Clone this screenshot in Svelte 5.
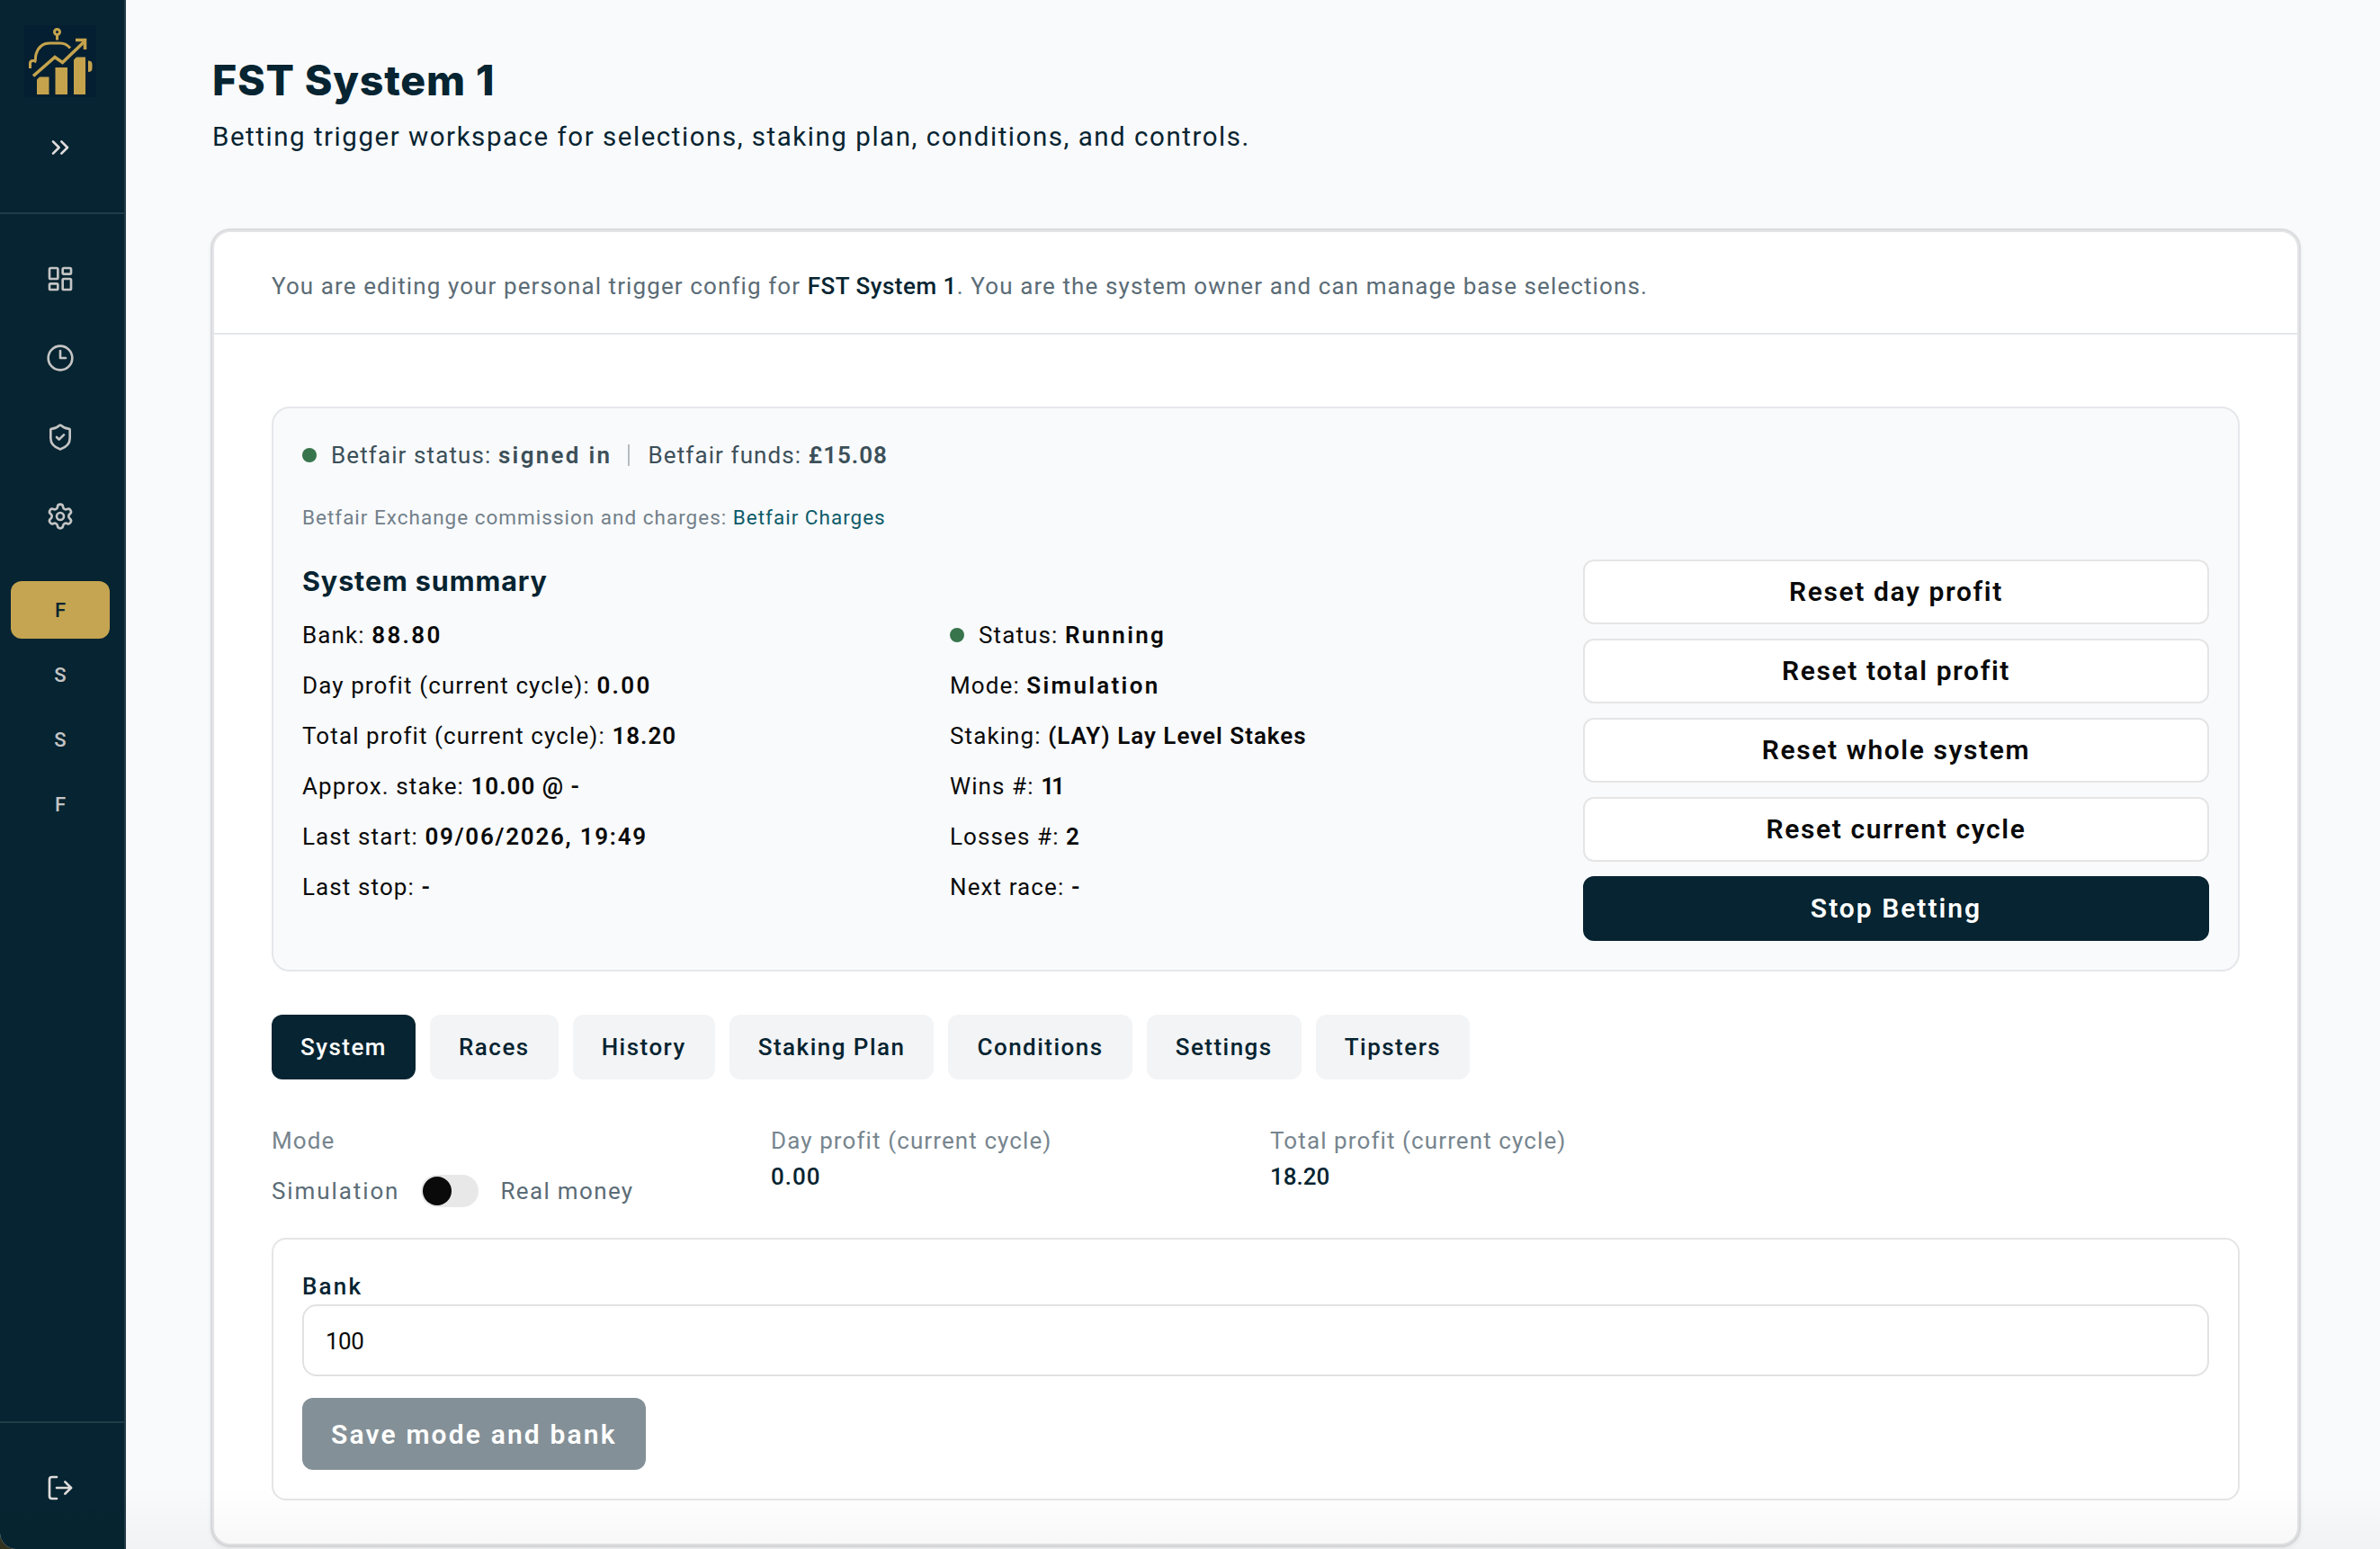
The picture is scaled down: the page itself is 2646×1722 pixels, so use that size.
<script lang="ts">
  const navItems = [
    {
      label: 'Dashboard',
      paths: ['M4 3h5a1 1 0 0 1 1 1v7a1 1 0 0 1-1 1H4a1 1 0 0 1-1-1V4a1 1 0 0 1 1-1z', 'M15 3h5a1 1 0 0 1 1 1v3a1 1 0 0 1-1 1h-5a1 1 0 0 1-1-1V4a1 1 0 0 1 1-1z', 'M15 12h5a1 1 0 0 1 1 1v7a1 1 0 0 1-1 1h-5a1 1 0 0 1-1-1v-7a1 1 0 0 1 1-1z', 'M4 16h5a1 1 0 0 1 1 1v3a1 1 0 0 1-1 1H4a1 1 0 0 1-1-1v-3a1 1 0 0 1 1-1z']
    },
    {
      label: 'History',
      paths: ['M22 12a10 10 0 1 1-20 0 10 10 0 0 1 20 0z', 'M12 6v6h4.5']
    },
    {
      label: 'Security',
      paths: ['M20 13c0 5-3.5 7.5-7.66 8.95a1 1 0 0 1-.67-.01C7.5 20.5 4 18 4 13V6a1 1 0 0 1 1-1c2 0 4.5-1.2 6.24-2.72a1.17 1.17 0 0 1 1.52 0C14.51 3.81 17 5 19 5a1 1 0 0 1 1 1z', 'm9 12 2 2 4-4']
    },
    {
      label: 'Settings',
      paths: ['M9.671 4.136a2.34 2.34 0 0 1 4.659 0 2.34 2.34 0 0 0 3.319 1.915 2.34 2.34 0 0 1 2.33 4.033 2.34 2.34 0 0 0 0 3.831 2.34 2.34 0 0 1-2.33 4.033 2.34 2.34 0 0 0-3.319 1.915 2.34 2.34 0 0 1-4.659 0 2.34 2.34 0 0 0-3.32-1.915 2.34 2.34 0 0 1-2.33-4.033 2.34 2.34 0 0 0 0-3.831A2.34 2.34 0 0 1 6.35 6.051a2.34 2.34 0 0 0 3.319-1.915', 'M15 12a3 3 0 1 1-6 0 3 3 0 0 1 6 0z']
    }
  ];
  const systems = ['F', 'S', 'S', 'F'];

  type Stat = { label: string; value: string; tracking?: 'snug' | 'tight' | 'ones'; dot?: boolean };

  const leftStats: Stat[] = [
    { label: 'Bank', value: '88.80' },
    { label: 'Day profit (current cycle)', value: '0.00' },
    { label: 'Total profit (current cycle)', value: '18.20', tracking: 'tight' },
    { label: 'Approx. stake', value: '10.00 @ -', tracking: 'tight' },
    { label: 'Last start', value: '09/06/2026, 19:49', tracking: 'snug' },
    { label: 'Last stop', value: '-' }
  ];
  const rightStats: Stat[] = [
    { label: 'Status', value: 'Running', dot: true },
    { label: 'Mode', value: 'Simulation' },
    { label: 'Staking', value: '(LAY) Lay Level Stakes', tracking: 'tight' },
    { label: 'Wins #', value: '11', tracking: 'ones' },
    { label: 'Losses #', value: '2' },
    { label: 'Next race', value: '-' }
  ];
  const resets = ['Reset day profit', 'Reset total profit', 'Reset whole system', 'Reset current cycle'];
  const tabs = ['System', 'Races', 'History', 'Staking Plan', 'Conditions', 'Settings', 'Tipsters'];

  let activeSystem = $state(0);
  let activeTab = $state('System');
  let realMoney = $state(false);
  let bank = $state('100');
</script>

{#snippet icon(paths: string[])}
  <svg class="icon" viewBox="0 0 24 24" fill="none" stroke="currentColor" stroke-width="2" stroke-linecap="round" stroke-linejoin="round">
    {#each paths as d}
      <path {d} />
    {/each}
  </svg>
{/snippet}

<div class="app">
  <aside class="sidebar">
    <div class="brand">
      <svg class="logo" viewBox="0 0 80 80" fill="none" stroke="#c5a34d" stroke-width="3">
        <rect width="80" height="80" fill="#041f31" stroke="none" />
        <circle cx="36.5" cy="7.5" r="3" />
        <path d="M36.5 11v5.5" />
        <path d="M11.500 41.500C13 39 12 36 13 32.500C15.500 24 21 20 28 20H40C45 20 48.500 22.500 51 25.500" />
        <path d="M12 39.500H9.500C7.500 39.500 6.500 40.500 6.500 42.500V48" />
        <path d="M10 56.500L34 35.500L42.500 41.500L67 18" stroke-width="3.600" />
        <path d="M57 16.500H67.500V27" stroke-width="3.600" />
        <g fill="#c5a34d" stroke="none">
          <path d="M17 57.500H27.500V77H14V60.500zM34.500 47H48V77H34.500zM58 35.500H68V77H55V38.500zM71 39.500C74 39.500 75.500 41 75.500 43.500V48C75.500 50.500 74 52 71 52z" />
        </g>
      </svg>
      <button class="expand" aria-label="Expand sidebar">{@render icon(['m6 17 5-5-5-5', 'm13 17 5-5-5-5'])}</button>
    </div>

    <nav class="nav">
      {#each navItems as item}
        <button class="nav-item" aria-label={item.label}>{@render icon(item.paths)}</button>
      {/each}
    </nav>

    <div class="systems">
      {#each systems as letter, i}
        <button class="system" class:active={activeSystem === i} onclick={() => (activeSystem = i)}>{letter}</button>
      {/each}
    </div>

    <div class="logout">
      <button class="nav-item bright" aria-label="Log out">
        {@render icon(['m16 17 5-5-5-5', 'M21 12H9', 'M9 21H5a2 2 0 0 1-2-2V5a2 2 0 0 1 2-2h4'])}
      </button>
    </div>
  </aside>

  <main class="main">
    <header class="page-header">
      <h1>FST System 1</h1>
      <p>Betting trigger workspace for selections, staking plan, conditions, and controls.</p>
    </header>

    <section class="card">
      <p class="card-header">
        You are editing your personal trigger config for <strong>FST System 1</strong>. You are the system owner and can manage base selections.
      </p>

      <div class="card-body">
        <div class="summary">
          <div class="betfair">
            <span class="dot"></span>
            <span class="betfair-status">Betfair status: <b>signed in</b></span>
            <span class="divider"></span>
            <span class="betfair-funds">Betfair funds: <b class="tight">£15.08</b></span>
          </div>
          <p class="charges">Betfair Exchange commission and charges: <a href="#charges">Betfair Charges</a></p>

          <div class="summary-grid">
            <div class="stats-area">
              <h2>System summary</h2>
              <div class="stats">
                {#each [leftStats, rightStats] as column}
                  <ul>
                    {#each column as stat}
                      <li>
                        {#if stat.dot}<span class="dot"></span>{/if}
                        <span>{stat.label}: <b class={stat.tracking}>{stat.value}</b></span>
                      </li>
                    {/each}
                  </ul>
                {/each}
              </div>
            </div>
            <div class="actions">
              {#each resets as label}
                <button class="btn">{label}</button>
              {/each}
              <button class="btn primary">Stop Betting</button>
            </div>
          </div>
        </div>

        <div class="tabs">
          {#each tabs as tab}
            <button class="tab" class:active={activeTab === tab} onclick={() => (activeTab = tab)}>{tab}</button>
          {/each}
        </div>

        <div class="metrics">
          <div>
            <span class="metric-label">Mode</span>
            <div class="mode">
              <span class="mode-name">Simulation</span>
              <button class="switch" class:on={realMoney} role="switch" aria-checked={realMoney} aria-label="Real money" onclick={() => (realMoney = !realMoney)}>
                <span class="knob"></span>
              </button>
              <span>Real money</span>
            </div>
          </div>
          <div>
            <span class="metric-label">Day profit (current cycle)</span>
            <span class="metric-value">0.00</span>
          </div>
          <div>
            <span class="metric-label">Total profit (current cycle)</span>
            <span class="metric-value tight">18.20</span>
          </div>
        </div>

        <form class="bank">
          <label for="bank">Bank</label>
          <input id="bank" type="text" bind:value={bank} />
          <button class="save" type="button" disabled>Save mode and bank</button>
        </form>
      </div>
    </section>
  </main>
  <div class="fade"></div>
</div>

<style>
  :global(body) {
    background: #33321f;
  }

  .app {
    --navy: #062431;
    --ink: #0a0a0a;
    --line: #e5e5e5;
    position: relative;
    display: flex;
    width: 2646px;
    height: 1722px;
    overflow: hidden;
    border-bottom-left-radius: 18px;
    background: #f9fafc;
    color: var(--ink);
    font-family: Roboto, 'Liberation Sans', sans-serif;
    font-size: 26px;
    letter-spacing: 1.1px;
  }

  .app * {
    box-sizing: border-box;
  }

  h1, h2, p, ul {
    margin: 0;
    padding: 0;
    list-style: none;
  }

  button, input {
    font: inherit;
    letter-spacing: inherit;
    margin: 0;
    padding: 0;
    border: none;
    background: none;
    color: inherit;
  }

  button {
    cursor: pointer;
  }

  b {
    font-weight: 600;
    letter-spacing: 2.3px;
  }

  b.snug {
    letter-spacing: 1.75px;
  }

  b.tight {
    letter-spacing: 1px;
  }

  b.ones {
    letter-spacing: -3px;
  }

  .icon {
    display: block;
    width: 32px;
    height: 32px;
  }

  .sidebar {
    display: flex;
    flex-direction: column;
    flex-shrink: 0;
    width: 140px;
    border-right: 2px solid #223c49;
    background: var(--navy);
    color: #c4c4c4;
  }

  .brand {
    display: flex;
    flex-direction: column;
    align-items: center;
    gap: 40px;
    height: 238px;
    padding: 28px 4px 0 0;
    border-bottom: 2px solid #223c49;
  }

  .logo {
    width: 80px;
    height: 80px;
  }

  .expand {
    color: #e0dcdc;
  }

  .nav {
    display: flex;
    flex-direction: column;
    gap: 8px;
    padding: 32px 16px 0 12px;
  }

  .nav-item {
    display: grid;
    place-items: center;
    height: 80px;
  }

  .systems {
    display: flex;
    flex-direction: column;
    flex: 1;
    gap: 8px;
    padding: 32px 16px 0 12px;
  }

  .system {
    height: 64px;
    border-radius: 12px;
    font-size: 22px;
    font-weight: 500;
    letter-spacing: 0;
  }

  .system.active {
    background: #c5a551;
    color: var(--navy);
  }

  .logout {
    display: grid;
    height: 142px;
    padding: 32px 16px 0 12px;
    border-top: 2px solid #223c49;
  }

  .bright {
    color: #e0dcdc;
  }

  .main {
    flex: 1;
    padding: 58px 90px 0 96px;
  }

  .page-header {
    height: 198px;
    color: var(--navy);
  }

  h1 {
    font-family: Inter, sans-serif;
    font-size: 46.5px;
    font-weight: 800;
    line-height: 62px;
    letter-spacing: 0.8px;
  }

  .page-header p {
    margin-top: 12px;
    font-size: 29.5px;
    line-height: 40px;
    letter-spacing: 1.53px;
  }

  .card {
    height: 1462px;
    border: 2px solid #e5e5e8;
    border-radius: 20px;
    background: #fff;
    box-shadow: 0 0 0 2px #dadbde, 0 2px 6px rgba(0, 0, 0, 0.12);
  }

  .card-header {
    height: 114px;
    padding: 0 64px;
    border-bottom: 2px solid #e5e7eb;
    color: #5b6c76;
    line-height: 120px;
  }

  .card-header strong {
    color: var(--navy);
    font-weight: 500;
    letter-spacing: 0.5px;
  }

  .card-body {
    padding: 80px 64px 0;
  }

  .summary {
    height: 628px;
    padding: 32px;
    border: 2px solid #e5e7eb;
    border-radius: 20px;
    background: #f9fafc;
  }

  .betfair {
    display: flex;
    align-items: center;
    height: 40px;
    color: #3c5059;
  }

  .dot {
    flex-shrink: 0;
    width: 16px;
    height: 16px;
    border-radius: 50%;
    background: #38754c;
  }

  .betfair-status {
    margin-left: 16px;
  }

  .divider {
    width: 2px;
    height: 24px;
    margin: 0 20px 0 18px;
    background: #b4bcc1;
  }

  .charges {
    margin-top: 33px;
    color: #72808a;
    font-size: 22.5px;
    line-height: 32px;
    letter-spacing: 1px;
  }

  .charges a {
    color: #0d5b69;
    text-decoration: none;
  }

  .summary-grid {
    display: grid;
    grid-template-columns: 1408px 1fr;
    gap: 16px;
    margin-top: 31px;
  }

  h2 {
    margin-bottom: 16px;
    color: var(--navy);
    font-family: Inter, sans-serif;
    font-size: 30.5px;
    font-weight: 700;
    line-height: 48px;
    letter-spacing: 0.9px;
  }

  .stats {
    display: grid;
    grid-template-columns: 1fr 1fr;
    gap: 32px;
  }

  li {
    display: flex;
    align-items: center;
    gap: 16px;
    height: 40px;
  }

  li + li {
    margin-top: 16px;
  }

  .actions {
    display: flex;
    flex-direction: column;
    gap: 16px;
  }

  .btn {
    height: 72px;
    padding-bottom: 1px;
    border: 2px solid var(--line);
    border-radius: 12px;
    background: #fff;
    font-size: 30px;
    font-weight: 600;
    letter-spacing: 1.6px;
  }

  .btn.primary {
    border-color: var(--navy);
    background: var(--navy);
    color: #fff;
    letter-spacing: 2px;
  }

  .tabs {
    display: flex;
    gap: 16px;
    margin-top: 48px;
  }

  .tab {
    height: 72px;
    padding: 0 32px;
    border-radius: 12px;
    background: #f3f4f6;
    color: var(--navy);
    font-weight: 500;
    letter-spacing: 1.48px;
  }

  .tab.active {
    background: var(--navy);
    color: #fff;
  }

  .metrics {
    display: grid;
    grid-template-columns: repeat(4, 1fr);
    gap: 32px;
    height: 128px;
    margin-top: 48px;
  }

  .metric-label,
  .metric-value {
    display: block;
    line-height: 40px;
  }

  .metric-label {
    color: #77858e;
  }

  .metric-value {
    color: var(--navy);
    font-weight: 500;
    letter-spacing: 1px;
  }

  .metric-value.tight {
    letter-spacing: 0;
  }

  .mode {
    display: flex;
    align-items: center;
    gap: 24px;
    height: 40px;
    margin-top: 16px;
    color: #5b6c76;
    letter-spacing: 1.35px;
  }

  .mode-name {
    letter-spacing: 1.9px;
  }

  .switch {
    display: flex;
    align-items: center;
    width: 64px;
    height: 36px;
    padding: 2px;
    border-radius: 18px;
    background: #e8e8e8;
  }

  .switch.on {
    justify-content: flex-end;
  }

  .knob {
    width: 32px;
    height: 32px;
    border-radius: 50%;
    background: var(--ink);
  }

  .bank {
    display: flex;
    flex-direction: column;
    align-items: flex-start;
    height: 292px;
    padding: 32px;
    border: 2px solid var(--line);
    border-radius: 16px;
  }

  .bank label {
    color: var(--navy);
    font-weight: 500;
    line-height: 40px;
    letter-spacing: 2.2px;
  }

  .bank input {
    width: 100%;
    height: 80px;
    padding: 2px 24px 0;
    border: 2px solid #e2e2e2;
    border-radius: 16px;
    letter-spacing: -0.5px;
  }

  .save {
    height: 80px;
    margin-top: 24px;
    padding: 0 32px;
    border-radius: 12px;
    background: #849097;
    color: #fff;
    font-size: 30px;
    font-weight: 600;
    letter-spacing: 2.15px;
  }

  /* soft shade along the bottom edge of the window */
  .fade {
    position: absolute;
    right: 0;
    bottom: 0;
    left: 0;
    height: 70px;
    background: linear-gradient(rgba(0, 0, 0, 0), rgba(0, 0, 0, 0.03));
    pointer-events: none;
  }
</style>
